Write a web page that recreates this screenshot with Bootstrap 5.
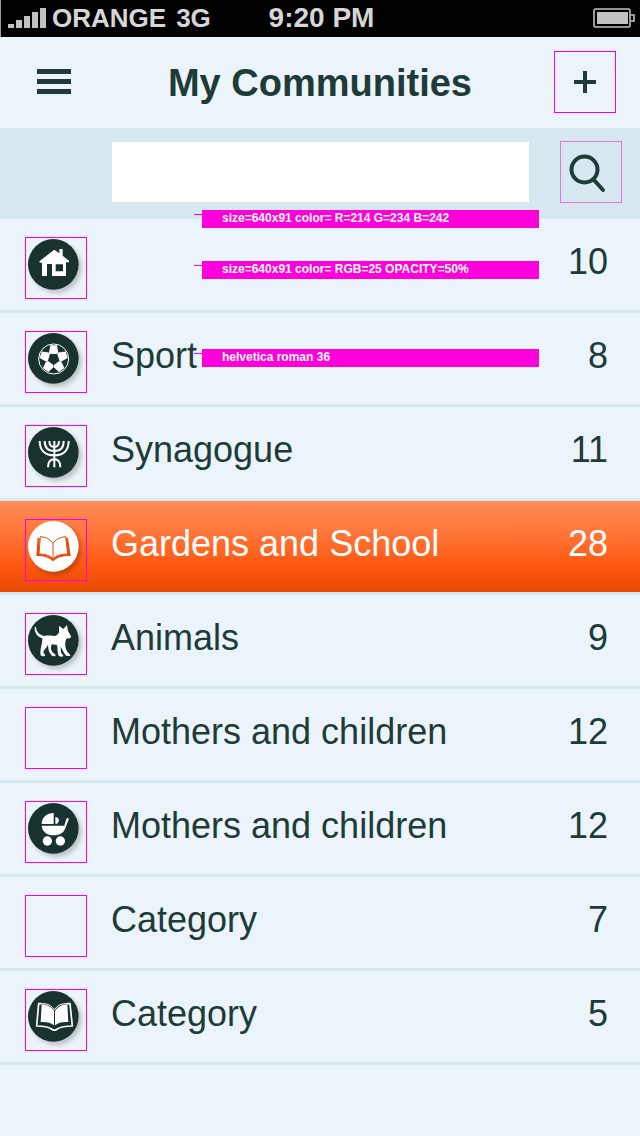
<!DOCTYPE html>
<html lang="en">
<head>
<meta charset="utf-8">
<meta name="viewport" content="width=device-width, initial-scale=1">
<title>My Communities</title>
<link href="https://cdn.jsdelivr.net/npm/bootstrap@5.3.0/dist/css/bootstrap.min.css" rel="stylesheet">
<style>
:root { --ink: #203b37; --disc: #1a322f; --paper: #ebf4fa; --band: #d6e9f0; --guide: #ff00dc; }
body { background: var(--paper); color: var(--ink); font-family: "Liberation Sans", Arial, sans-serif; }
.status-bar { background: #000; color: #d6d6d6; height: 37px; line-height: 34px; padding: 0 5px 2px 7px; font-size: 26px; font-weight: 700; border-left: 1px solid #999; }
.status-bar .clock { font-size: 28px; }
.status-side { flex: 1 1 0; }
.carrier { margin: 0 10px 0 6px; }
.top-bar { height: 91px; padding: 14px 24px 15px; }
.top-bar h1 { font-size: 38px; line-height: 64px; font-weight: 700; }
.tool { width: 62px; height: 62px; padding: 0; border: 0; background: none; color: inherit; flex: none; }
.tool svg { display: block; }
.guide-box { outline: 1px solid var(--guide); outline-offset: -1px; }
.guide-soft { outline-color: #ee6fe6; }
.search-bar { background: var(--band); padding: 13px 18px 16px 112px; z-index: 1; }
.search-bar input { height: 60px; border: 0; border-radius: 0; background: #fff; margin: 1px 31px 0 0; }
.community { color: var(--ink); text-decoration: none; font-size: 36px; line-height: 50px; padding: 18px 32px 11px 25px; border-bottom: 3px solid var(--band); gap: 24px; }
.community .guide-box { width: 62px; height: 62px; flex: none; }
.community svg { display: block; }
.community circle.disc { fill: var(--disc); filter: drop-shadow(9px 10px 6px rgba(0,0,0,.2)); }
.community.chosen { color: #fff; background: linear-gradient(#ff8b57, #ff7a3e 30%, #ff5a14 68%, #ea4800) padding-box; }
.community.chosen circle.disc { fill: #fff; }
.guide-note { position: absolute; left: 202px; width: 337px; height: 18px; padding-left: 20px; background: var(--guide); color: #fff; font-size: 12px; line-height: 16px; font-weight: 700; white-space: nowrap; }
.guide-note::before { content: ""; position: absolute; right: 100%; top: 4px; width: 8px; height: 1px; background: var(--guide); }
.note-band { top: 82px; }
.note-row { top: 42px; }
.note-font { top: 36px; }
</style>
</head>
<body>
<div class="status-bar d-flex align-items-center">
  <div class="status-side d-flex align-items-center">
    <svg width="38" height="20" viewBox="0 0 38 20" fill="#c2c2c2" aria-hidden="true"><path d="M0 16h6v4H0zM8 12h6v8H8zM16 8h6v12h-6zM24 4h6v16h-6zM32 0h6v20h-6z"/></svg>
    <span class="carrier">ORANGE</span><span>3G</span>
  </div>
  <span class="clock">9:20 PM</span>
  <div class="status-side d-flex justify-content-end">
    <svg width="42" height="20" viewBox="0 0 42 20" fill="none" stroke="#c2c2c2" stroke-width="1.6" aria-hidden="true"><rect x="1" y="1" width="36" height="18" rx="1.5"/><path d="M38 7h3v6h-3"/><path d="M4 4h31v12H4z" fill="#c2c2c2" stroke="none"/></svg>
  </div>
</div>

<header class="top-bar d-flex align-items-start">
  <button class="tool" type="button" aria-label="Menu"><svg width="62" height="62" viewBox="0 0 62 62" fill="currentColor"><path d="M13 18h34v5H13zM13 28h34v5H13zM13 38h34v5H13z"/></svg></button>
  <h1 class="flex-fill text-center m-0">My Communities</h1>
  <button class="tool guide-box" type="button" aria-label="Add community"><svg width="62" height="62" viewBox="0 0 62 62" fill="currentColor"><path d="M29 20h4v9h9v4h-9v9h-4v-9h-9v-4h9z"/></svg></button>
</header>

<form class="search-bar d-flex align-items-start position-relative">
  <input class="form-control flex-fill" type="text" aria-label="Search communities">
  <button class="tool guide-box guide-soft" type="submit" aria-label="Search"><svg width="62" height="62" viewBox="0 0 62 62" fill="none" stroke="currentColor" stroke-width="4" stroke-linecap="round"><circle cx="24.5" cy="28.5" r="13"/><path d="M34 39l9 10"/></svg></button>
  <span class="guide-note note-band">size=640x91 color= R=214 G=234 B=242</span>
</form>

<nav aria-label="Communities">
  <a class="community d-flex align-items-start position-relative" href="#home" aria-label="Home">
    <span class="guide-box"><svg width="62" height="62" viewBox="0 0 186 186"><circle class="disc" cx="85" cy="82" r="76"/>
      <path fill="#fff" fill-rule="evenodd" d="M88 38 103 49V36h10v20l19 15q2 5-4 5h-5v41H81V81H66v36H51V77h-6q-3-2-1-5zM92 82v21h22V82z"/></svg></span>
    <span class="flex-fill"></span><span>10</span>
    <span class="guide-note note-row">size=640x91 color= RGB=25 OPACITY=50%</span>
  </a>
  <a class="community d-flex align-items-start position-relative" href="#sport">
    <span class="guide-box"><svg width="62" height="62" viewBox="0 0 186 186"><circle class="disc" cx="85" cy="82" r="76"/>
      <g transform="translate(86 84)"><circle r="45" fill="none" stroke="#fff" stroke-width="3"/>
      <g fill="#fff"><path id="patch" d="M-10-41H10L14-20 10-15H-10L-14-20z"/><use href="#patch" transform="rotate(72)"/><use href="#patch" transform="rotate(144)"/><use href="#patch" transform="rotate(216)"/><use href="#patch" transform="rotate(288)"/></g></g></svg></span>
    <span class="flex-fill">Sport</span><span>8</span>
    <span class="guide-note note-font">helvetica roman 36</span>
  </a>
  <a class="community d-flex align-items-start" href="#synagogue">
    <span class="guide-box"><svg width="62" height="62" viewBox="0 0 186 186"><circle class="disc" cx="85" cy="82" r="76"/>
      <g fill="none" stroke="#fff" stroke-width="6"><path d="M44 48C44 76 61 91 88 91s43-15 43-43M59 48c0 20 11 30 29 30s28-10 28-30M73 48c0 12 6 18 15 18s14-6 14-18M88 48v79M69 127c0-15 5-24 19-24s18 9 18 24"/></g></svg></span>
    <span class="flex-fill">Synagogue</span><span>11</span>
  </a>
  <a class="community chosen d-flex align-items-start" href="#gardens" aria-current="page">
    <span class="guide-box"><svg width="62" height="62" viewBox="0 0 186 186"><circle class="disc" cx="85" cy="82" r="76"/>
      <path fill="#e44b0c" d="M38 57h6l-2 49q27-1 42 14 15-15 42-14l-3-50h6l8 55q-36-1-53 16-17-17-50-16z"/>
      <path fill="#fff" stroke="#e44b0c" stroke-width="3" stroke-linejoin="round" d="M46 53q25 1 38 20 12-18 38-20l6 52q-31 0-44 14-13-14-42-14zM84 73v46"/></svg></span>
    <span class="flex-fill">Gardens and School</span><span>28</span>
  </a>
  <a class="community d-flex align-items-start" href="#animals">
    <span class="guide-box"><svg width="62" height="62" viewBox="0 0 186 186"><circle class="disc" cx="85" cy="82" r="76"/>
      <path fill="#fff" d="M29 43C28 58 36 72 52 76C53 90 46 104 46 120C46 128 50 131 60 129C61 123 55 122 55 118C56 110 66 104 69 95C70 106 70 114 77 123C80 129 85 131 92 129C92 122 86 122 82 117C77 110 77 103 80 94L96 96C98 106 97 117 100 126C102 131 108 132 115 130C115 124 109 123 108 117L107 101C112 108 115 118 121 125C125 130 130 130 136 128C136 123 130 121 127 116C121 107 120 98 121 88C122 82 123 78 127 76C134 77 139 75 138 70L129 54L126 36L115 48L102 38L102 58C99 66 94 69 86 69C76 67 66 68 57 69C44 66 34 57 33 43C32 41 30 41 29 43z"/></svg></span>
    <span class="flex-fill">Animals</span><span>9</span>
  </a>
  <a class="community d-flex align-items-start" href="#mothers">
    <span class="guide-box"></span>
    <span class="flex-fill">Mothers and children</span><span>12</span>
  </a>
  <a class="community d-flex align-items-start" href="#children">
    <span class="guide-box"><svg width="62" height="62" viewBox="0 0 186 186"><circle class="disc" cx="85" cy="82" r="76"/>
      <path fill="#fff" d="M86 36v33H50c0-20 16-33 36-33zM91 48c8 0 11 6 11 12l-5 8h-6zM50 74h68l6-20q2-4 6-2 2 1 1 4l-9 22c-4 17-18 25-36 25-19 0-34-10-36-29z"/><g fill="#fff"><circle cx="67" cy="120" r="14"/><circle cx="106" cy="120" r="14"/></g></svg></span>
    <span class="flex-fill">Mothers and children</span><span>12</span>
  </a>
  <a class="community d-flex align-items-start" href="#category-1">
    <span class="guide-box"></span>
    <span class="flex-fill">Category</span><span>7</span>
  </a>
  <a class="community d-flex align-items-start" href="#category-2">
    <span class="guide-box"><svg width="62" height="62" viewBox="0 0 186 186"><circle class="disc" cx="85" cy="82" r="76"/>
      <path fill="none" stroke="#fff" stroke-width="5" stroke-linejoin="round" d="M49 44h-8l-6 67q30 0 44 9 9 7 18 0 14-9 45-9l-7-67h-9"/>
      <path fill="#fff" d="M50 46q24 0 37 20v43q-13-12-40-10zM127 46q-24 0-37 20v43q13-12 40-10z"/><path fill="none" stroke="#fff" stroke-width="3" d="M49 44q27-2 39 19 12-21 39-19"/></svg></span>
    <span class="flex-fill">Category</span><span>5</span>
  </a>
</nav>
<script src="https://cdn.jsdelivr.net/npm/bootstrap@5.3.0/dist/js/bootstrap.bundle.min.js"></script>
</body>
</html>
